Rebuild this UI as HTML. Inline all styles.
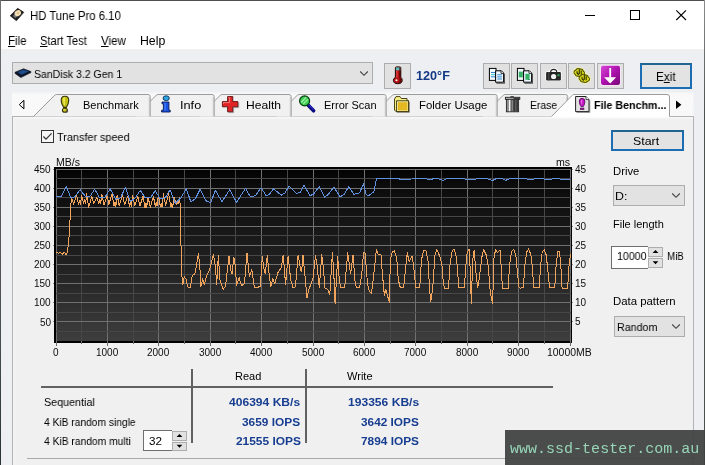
<!DOCTYPE html>
<html lang="en"><head><meta charset="utf-8"><title>HD Tune Pro 6.10</title>
<style>
html,body{margin:0;padding:0}
body{width:705px;height:465px;overflow:hidden;position:relative;background:#eeeff2;font-family:"Liberation Sans",sans-serif;color:#000}
.abs,.t,.b,.btn,.cb{position:absolute;box-sizing:border-box}
.t{white-space:nowrap;line-height:20px;display:block;will-change:transform;transform-origin:0 0}
.t u{text-decoration:underline;text-underline-offset:1px;text-decoration-thickness:1px}
.btn{border:1px solid #adadad;background:#e1e1e1}
.cb{border:1px solid #adadad;background:#e2e2e2}
svg{position:absolute;overflow:visible}
</style></head><body>
<!-- title + menu -->
<div class="abs" style="left:0;top:0;width:705px;height:49px;background:#fff"></div>
<div class="abs" style="left:0;top:49px;width:705px;height:4px;background:#efefef"></div>
<svg style="left:0;top:0" width="40" height="30" viewBox="0 0 40 30">
<path d="M17.6 8.3 L23.8 12.3 L16.4 20.7 L10.2 15.8 Z" fill="#1f1d1b" stroke="#1f1d1b" stroke-width="0.7" stroke-linejoin="round"/>
<path d="M12.8 16 L15.4 18.2 L17.8 15.9 L14.8 14 Z" fill="#70767e"/>
<ellipse cx="17.8" cy="13.1" rx="3.4" ry="2.8" fill="#f2dfb8" transform="rotate(-35 17.8 13.1)"/>
<ellipse cx="17.9" cy="13" rx="1.1" ry="0.9" fill="#dcb478"/>
</svg>
<svg style="left:0;top:0" width="705" height="30" viewBox="0 0 705 30" shape-rendering="crispEdges">
<rect x="585" y="15" width="10" height="1" fill="#000"/>
<rect x="630.5" y="10.5" width="9" height="9" fill="none" stroke="#000" stroke-width="1"/>
<path d="M676.3 10.3 L686 20 M686 10.3 L676.3 20" stroke="#000" stroke-width="1.1" fill="none" shape-rendering="geometricPrecision"/>
</svg>
<!-- toolbar -->
<div class="cb" style="left:12px;top:62px;width:361px;height:22px"></div>
<svg style="left:359px;top:70px" width="10" height="8" viewBox="0 0 10 8"><path d="M1.2 1.5 L5 5.3 L8.8 1.5" fill="none" stroke="#444" stroke-width="1.1"/></svg>
<svg style="left:0;top:0" width="40" height="90" viewBox="0 0 40 90">
<path d="M15 72.2 L23.6 68.8 L31 71.6 L31 72.6 L20.8 77.6 L15 73.4 Z" fill="#0e1526" stroke="#0e1526" stroke-width="0.6" stroke-linejoin="round"/>
<path d="M17.6 72.1 L23.6 69.8 L28.6 71.6 L21.4 74.8 Z" fill="#1f4e8c"/>
</svg>
<div class="btn" style="left:384px;top:63px;width:27px;height:26px"></div>
<div class="btn" style="left:483px;top:63px;width:27px;height:26px"></div>
<div class="btn" style="left:511px;top:63px;width:27px;height:26px"></div>
<div class="btn" style="left:540px;top:63px;width:27px;height:26px"></div>
<div class="btn" style="left:568px;top:63px;width:27px;height:26px"></div>
<div class="btn" style="left:597px;top:63px;width:27px;height:26px"></div>
<svg style="left:0;top:0" width="420" height="95" viewBox="0 0 420 95">
<path d="M395.4 67.9 Q395.4 66.9 396.6 66.9 L399.6 66.9 Q400.8 66.9 400.8 67.9 L400.8 77.3 Q402.2 78.3 402.2 80.3 Q402.2 83.7 397.8 83.7 Q393.4 83.7 393.4 80.3 Q393.4 78.3 395.4 77.3 Z" fill="#b41212" stroke="#1c0606" stroke-width="1"/>
<rect x="395.9" y="67.4" width="4.4" height="3" fill="#5cb8b8"/>
<rect x="399.2" y="67.4" width="1.2" height="10" fill="#3a0808" opacity="0.75"/>
<path d="M399.4 77.6 Q401.6 78.6 401.6 80.3 Q401.6 83 398.4 83.2 Q400.2 81.6 399.4 77.6 Z" fill="#4a0808" opacity="0.8"/>
<rect x="396.3" y="70.5" width="1.2" height="7" fill="#e24848"/>
<circle cx="396.5" cy="80.2" r="1.05" fill="#fff"/>
</svg>
<svg style="left:0;top:0" width="600" height="95" viewBox="0 0 600 95">
<g transform="translate(0 0)">
<rect x="489.4" y="68.4" width="6.6" height="12" fill="#f4fbff" stroke="#000" stroke-width="1"/>
<path d="M495.6 70.8 L501.4 70.8 L503.6 73 L503.6 82.2 L495.6 82.2 Z" fill="#eef6ff" stroke="#000" stroke-width="1"/>
<path d="M501 70.8 L501 73.4 L503.6 73.4" fill="#fff" stroke="#000" stroke-width="0.8"/>
<rect x="503.9" y="73.6" width="0.9" height="9.6" fill="#333"/><rect x="496.4" y="82.7" width="8.4" height="0.9" fill="#333"/>
<g fill="#2f86c8"><rect x="491" y="72" width="4" height="1"/><rect x="491" y="74.2" width="4" height="1" fill="#39c0d8"/><rect x="491" y="76.3" width="4" height="1"/>
<rect x="497.3" y="74.3" width="4.6" height="1"/><rect x="497.3" y="76.4" width="4.6" height="1"/><rect x="497.3" y="78.5" width="4.6" height="1"/></g>
</g></svg>
<svg style="left:0;top:0" width="600" height="95" viewBox="0 0 600 95">
<g transform="translate(28 0)">
<rect x="489.4" y="68.4" width="6.6" height="12" fill="#f4fbff" stroke="#000" stroke-width="1"/>
<path d="M495.6 70.8 L501.4 70.8 L503.6 73 L503.6 82.2 L495.6 82.2 Z" fill="#eef6ff" stroke="#000" stroke-width="1"/>
<path d="M501 70.8 L501 73.4 L503.6 73.4" fill="#fff" stroke="#000" stroke-width="0.8"/>
<rect x="503.9" y="73.6" width="0.9" height="9.6" fill="#333"/><rect x="496.4" y="82.7" width="8.4" height="0.9" fill="#333"/>
<rect x="490.8" y="71.6" width="4" height="5.8" fill="#36b064"/><rect x="497.4" y="73.8" width="4.2" height="6" fill="#36b064"/><rect x="500.5" y="79" width="1" height="1" fill="#063"/>
</g></svg>
<svg style="left:0;top:0" width="600" height="95" viewBox="0 0 600 95">
<path d="M550.6 72 Q550.6 69.2 553.6 69.2 Q556.8 69.2 556.8 72" fill="none" stroke="#fff" stroke-width="2.6"/>
<rect x="545.4" y="71.2" width="16.2" height="9.9" rx="1.8" fill="#fff"/>
<path d="M550.6 72.4 Q550.6 69.4 553.6 69.4 Q556.8 69.4 556.8 72.4" fill="none" stroke="#242424" stroke-width="1.1"/>
<rect x="546.1" y="71.9" width="14.8" height="8.5" rx="1.2" fill="#262626"/>
<rect x="548.4" y="72" width="0.9" height="8.3" fill="#555"/>
<circle cx="553.6" cy="76.5" r="2.6" fill="#f4f4f4"/>
<rect x="557.4" y="74.2" width="2.2" height="2" fill="#2fa05a"/>
</svg>
<svg style="left:0;top:0" width="600" height="95" viewBox="0 0 600 95">
<g fill="#f6f6a8"><circle cx="576.4" cy="72.3" r="3.6"/><circle cx="578.3" cy="71.0" r="3.8"/><circle cx="580.7" cy="71.6" r="3.8"/><circle cx="582.3" cy="73.3" r="3.5"/><circle cx="580.1" cy="74.1" r="3.8"/><circle cx="577.7" cy="73.8" r="3.7"/><circle cx="581.4" cy="78.1" r="3.6"/><circle cx="583.3" cy="76.8" r="3.8"/><circle cx="585.7" cy="77.4" r="3.8"/><circle cx="587.3" cy="79.1" r="3.5"/><circle cx="585.1" cy="79.9" r="3.8"/><circle cx="582.7" cy="79.6" r="3.7"/></g>
<g fill="#4e4e04"><circle cx="576.4" cy="72.3" r="2.8"/><circle cx="578.3" cy="71.0" r="3.0"/><circle cx="580.7" cy="71.6" r="3.0"/><circle cx="582.3" cy="73.3" r="2.7"/><circle cx="580.1" cy="74.1" r="3.0"/><circle cx="577.7" cy="73.8" r="2.9"/></g><g fill="#d8d81c"><circle cx="576.4" cy="72.3" r="1.9"/><circle cx="578.3" cy="71.0" r="2.0"/><circle cx="580.7" cy="71.6" r="2.0"/><circle cx="582.3" cy="73.3" r="1.8"/><circle cx="580.1" cy="74.1" r="2.0"/><circle cx="577.7" cy="73.8" r="2.0"/></g><path d="M579.3 69.3 L579.3 73.9 M581.2 70.5 L581.2 74.5 M577.0 71.3 Q576.7 74.1 579.1 74.5" fill="none" stroke="#2e2e00" stroke-width="1.1"/>
<g fill="#4e4e04"><circle cx="581.4" cy="78.1" r="2.8"/><circle cx="583.3" cy="76.8" r="3.0"/><circle cx="585.7" cy="77.4" r="3.0"/><circle cx="587.3" cy="79.1" r="2.7"/><circle cx="585.1" cy="79.9" r="3.0"/><circle cx="582.7" cy="79.6" r="2.9"/></g><g fill="#d8d81c"><circle cx="581.4" cy="78.1" r="1.9"/><circle cx="583.3" cy="76.8" r="2.0"/><circle cx="585.7" cy="77.4" r="2.0"/><circle cx="587.3" cy="79.1" r="1.8"/><circle cx="585.1" cy="79.9" r="2.0"/><circle cx="582.7" cy="79.6" r="2.0"/></g><path d="M584.3 75.1 L584.3 79.7 M586.2 76.3 L586.2 80.3 M582.0 77.1 Q581.7 79.9 584.1 80.3" fill="none" stroke="#2e2e00" stroke-width="1.1"/>
</svg>
<svg style="left:0;top:0" width="640" height="95" viewBox="0 0 640 95">
<defs><linearGradient id="mg" x1="0" y1="0" x2="1" y2="1"><stop offset="0" stop-color="#d648d6"/><stop offset="0.5" stop-color="#ad12ad"/><stop offset="1" stop-color="#780878"/></linearGradient></defs>
<rect x="600.2" y="64.9" width="20.6" height="20.8" rx="2.6" fill="#fbe6fb"/>
<rect x="601" y="65.7" width="19" height="19.2" rx="1.8" fill="url(#mg)"/>
<path d="M609.3 67.9 L611.1 67.9 L611.1 77.3 L616.1 77.3 L610.2 83.4 L604.1 77.3 L609.3 77.3 Z" fill="#fff"/>
</svg>
<div class="abs" style="left:640px;top:63px;width:52px;height:26px;border:2px solid #1c6db2;border-top-color:#216590;background:#e3e3e3"></div>
<!-- tab strip + page -->
<svg style="left:0;top:0" width="705" height="465" viewBox="0 0 705 465">
<defs><linearGradient id="tsg" x1="0" y1="0" x2="0" y2="1"><stop offset="0" stop-color="#f2f3f5"/><stop offset="0.12" stop-color="#f9f9f9"/><stop offset="1" stop-color="#f8f8f8"/></linearGradient></defs>
<rect x="12" y="92" width="681.5" height="24.5" fill="url(#tsg)"/>
<rect x="12.5" y="116.5" width="681" height="360" fill="#f0f0f0" stroke="#b4b4b4" stroke-width="1"/>
<rect x="13.5" y="117.5" width="679" height="1" fill="#fafafa"/>
<rect x="13.5" y="117.5" width="1" height="350" fill="#f6f6f6"/>
<path d="M482 116.5 L503.4 95.1 Q504 94.5 505 94.5 L565.5 94.5 Q567.7 94.5 567.7 96.7 L567.7 116.5 Z" fill="#f1f1f1" stroke="none"/><path d="M482 116.5 L503.4 95.1 Q504 94.5 505 94.5 L565.5 94.5 Q567.7 94.5 567.7 96.7 L567.7 116.5" fill="none" stroke="#9c9c9c" stroke-width="1"/><path d="M566.8 97.0 L566.8 116.5" fill="none" stroke="#c2c2c2" stroke-width="1"/><path d="M371 116.5 L392.4 95.1 Q393 94.5 394 94.5 L495.0 94.5 Q497.2 94.5 497.2 96.7 L497.2 116.5 Z" fill="#f1f1f1" stroke="none"/><path d="M371 116.5 L392.4 95.1 Q393 94.5 394 94.5 L495.0 94.5 Q497.2 94.5 497.2 96.7 L497.2 116.5" fill="none" stroke="#9c9c9c" stroke-width="1"/><path d="M496.3 97.0 L496.3 116.5" fill="none" stroke="#c2c2c2" stroke-width="1"/><path d="M276 116.5 L297.4 95.1 Q298 94.5 299 94.5 L384.0 94.5 Q386.2 94.5 386.2 96.7 L386.2 116.5 Z" fill="#f1f1f1" stroke="none"/><path d="M276 116.5 L297.4 95.1 Q298 94.5 299 94.5 L384.0 94.5 Q386.2 94.5 386.2 96.7 L386.2 116.5" fill="none" stroke="#9c9c9c" stroke-width="1"/><path d="M385.3 97.0 L385.3 116.5" fill="none" stroke="#c2c2c2" stroke-width="1"/><path d="M199 116.5 L220.4 95.1 Q221 94.5 222 94.5 L289.0 94.5 Q291.2 94.5 291.2 96.7 L291.2 116.5 Z" fill="#f1f1f1" stroke="none"/><path d="M199 116.5 L220.4 95.1 Q221 94.5 222 94.5 L289.0 94.5 Q291.2 94.5 291.2 96.7 L291.2 116.5" fill="none" stroke="#9c9c9c" stroke-width="1"/><path d="M290.3 97.0 L290.3 116.5" fill="none" stroke="#c2c2c2" stroke-width="1"/><path d="M135 116.5 L156.4 95.1 Q157 94.5 158 94.5 L212.0 94.5 Q214.2 94.5 214.2 96.7 L214.2 116.5 Z" fill="#f1f1f1" stroke="none"/><path d="M135 116.5 L156.4 95.1 Q157 94.5 158 94.5 L212.0 94.5 Q214.2 94.5 214.2 96.7 L214.2 116.5" fill="none" stroke="#9c9c9c" stroke-width="1"/><path d="M213.3 97.0 L213.3 116.5" fill="none" stroke="#c2c2c2" stroke-width="1"/><path d="M33.5 116.5 L54.9 95.1 Q55.5 94.5 56.5 94.5 L148.0 94.5 Q150.2 94.5 150.2 96.7 L150.2 116.5 Z" fill="#f1f1f1" stroke="none"/><path d="M33.5 116.5 L54.9 95.1 Q55.5 94.5 56.5 94.5 L148.0 94.5 Q150.2 94.5 150.2 96.7 L150.2 116.5" fill="none" stroke="#9c9c9c" stroke-width="1"/><path d="M149.3 97.0 L149.3 116.5" fill="none" stroke="#c2c2c2" stroke-width="1"/>
<path d="M551.5 116.5 L573 94.5 L667 94.5 Q669.5 94.5 669.5 97 L669.5 117.6 L550.4 117.6 Z" fill="#fff"/>
<path d="M551.5 116.5 L573 94.5 L667 94.5 Q669.5 94.5 669.5 97 L669.5 116.5" fill="none" stroke="#9c9c9c" stroke-width="1"/>
<path d="M23.9 100.3 L23.9 108.9 L19.3 104.6 Z" fill="none" stroke="#000" stroke-width="1"/>
<path d="M676 100.6 L676 109 L681.4 104.8 Z" fill="#000"/>
</svg>
<svg style="left:0;top:0" width="705" height="120" viewBox="0 0 705 120">
<!-- exclamation -->
<path d="M65 96.3 Q68.9 96.3 68.7 100.6 Q68.5 104.4 66.3 107.3 L63.7 107.3 Q61.4 104.4 61.2 100.6 Q61 96.3 65 96.3 Z" fill="#c6c218" stroke="#34340a" stroke-width="1.1"/>
<path d="M63.2 98.2 Q64 97.2 65 97.4 L65 105 L63.9 105 Q62.5 101 63.2 98.2 Z" fill="#e6e650"/>
<rect x="63.4" y="107" width="3.2" height="1.2" fill="#34340a"/>
<ellipse cx="64.9" cy="110.3" rx="2.5" ry="2" fill="#c6c218" stroke="#34340a" stroke-width="1.1"/>
<ellipse cx="64.2" cy="109.8" rx="0.9" ry="0.7" fill="#e6e650"/>
<ellipse cx="66.8" cy="111.6" rx="1.5" ry="1.1" fill="#5a4a50" opacity="0.55"/>
<!-- info -->
<ellipse cx="166.2" cy="98.2" rx="3.1" ry="2.4" fill="#2ea6e0" stroke="#0c2c58" stroke-width="0.9"/>
<path d="M162 102 L168.9 102 L168.9 110.2 L170.2 110.2 L170.2 112 L161.6 112 L161.6 110.2 L163.4 110.2 L163.4 103.8 L162 103.8 Z" fill="#1a52e4" stroke="#0a1850" stroke-width="0.9" stroke-linejoin="round"/>
<rect x="164.3" y="103" width="1.6" height="7.5" fill="#4a86f8" opacity="0.7"/>
<!-- health cross -->
<path d="M227.6 96.6 L232.8 96.6 L232.8 101.6 L237.9 101.6 L237.9 106.8 L232.8 106.8 L232.8 111.8 L227.6 111.8 L227.6 106.8 L222.4 106.8 L222.4 101.6 L227.6 101.6 Z" fill="#e02424" stroke="#5a1010" stroke-width="0.9" stroke-linejoin="round"/>
<path d="M228.4 97.6 L229.6 97.6 L229.6 102.6 L223.4 102.6 L223.4 103.8" fill="none" stroke="#f47878" stroke-width="1"/>
<path d="M233.6 107.6 L238.7 107.6 L238.7 102.6 M228.4 112.6 L233.6 112.6 L233.6 107.6" fill="none" stroke="#7a6060" stroke-width="0.9" opacity="0.6"/>
<!-- magnifier -->
<path d="M308 105 L313.6 110.8" stroke="#0c0c7c" stroke-width="3.6" stroke-linecap="round"/>
<path d="M308.6 104.4 L313.2 109.4" stroke="#2828c8" stroke-width="1.2" stroke-linecap="round"/>
<circle cx="304.6" cy="100.9" r="5.0" fill="#3ccc50" stroke="#063a0e" stroke-width="1.2"/>
<path d="M301.6 102 L305.8 97.6 M303.6 103.6 L307.6 99.6" stroke="#a0f0a8" stroke-width="1.3" stroke-linecap="round"/>
<!-- folder -->
<path d="M394.5 99 L396 96.6 L400 96.6 L401.4 98.5 L407 98.5 L407 101 L408.6 101 L408.6 111.6 L396.4 111.6 L394.5 110.2 Z" fill="#f4ee86" stroke="#3a3204" stroke-width="0.9" stroke-linejoin="round"/>
<rect x="396.6" y="100.8" width="12" height="10.8" fill="#f6efa0" stroke="#3a3204" stroke-width="0.9"/>
<rect x="398" y="102.2" width="9.4" height="8.2" fill="#e4b822"/>
<path d="M409.4 102 L409.4 112.4 L397 112.4" fill="none" stroke="#6a6458" stroke-width="0.9" opacity="0.7"/>
<!-- trash -->
<rect x="510.4" y="96.2" width="3.4" height="1.4" fill="#2c2c2c"/>
<rect x="505.4" y="97.3" width="14.4" height="2" fill="#c4c4c4" stroke="#222" stroke-width="0.9"/>
<rect x="513.6" y="97.6" width="6" height="1.5" fill="#3a3a3a"/>
<rect x="506.4" y="99.4" width="12.2" height="12.4" fill="#8c8c8c" stroke="#262626" stroke-width="0.9"/>
<rect x="513.2" y="99.8" width="5" height="11.6" fill="#383838"/>
<rect x="508.9" y="99.8" width="1.3" height="11.4" fill="#f4f4f4"/>
<rect x="511.2" y="99.8" width="1" height="11.4" fill="#5a5a5a"/>
<rect x="515.4" y="99.8" width="0.9" height="11.4" fill="#6c6c6c"/>
<!-- file benchmark page -->
<path d="M575.6 96.5 L586 96.5 L589 99.6 L589 111.6 L575.6 111.6 Z" fill="#e4e2e4" stroke="#222" stroke-width="1" stroke-linejoin="round"/>
<path d="M586 96.5 L586 99.6 L589 99.6" fill="#fff" stroke="#222" stroke-width="0.8"/>
<path d="M589.8 100.4 L589.8 112.4 L576.6 112.4" fill="none" stroke="#444" stroke-width="0.8" opacity="0.7"/>
<path d="M582.1 98.3 Q585 98.3 584.9 101.6 Q584.8 104.4 583.3 106.6 L581 106.6 Q579.4 104.4 579.3 101.6 Q579.2 98.3 582.1 98.3 Z" fill="#c214c2" stroke="#4c0850" stroke-width="0.8"/>
<path d="M581 100 Q581.6 99.3 582.2 99.4 L582.2 104.6 L581.4 104.6 Q580.6 102 581 100 Z" fill="#e868e8"/>
<rect x="580.2" y="108" width="3.8" height="1.7" fill="#8a1a8a" stroke="#4c0850" stroke-width="0.5"/>
</svg>
<!-- page contents -->
<div class="abs" style="left:41px;top:130px;width:13px;height:13px;border:1px solid #333;background:#f6f6f6"></div>
<svg style="left:41px;top:130px" width="13" height="13" viewBox="0 0 13 13"><path d="M2.4 6.5 L5 9.2 L10.6 3.4" fill="none" stroke="#333" stroke-width="1.25"/></svg>
<svg class="abs" style="left:0;top:0" width="705" height="465" viewBox="0 0 705 465">
<defs><linearGradient id="cg" x1="0" y1="0" x2="0" y2="1"><stop offset="0" stop-color="#030303"/><stop offset="0.1" stop-color="#0c0c0c"/><stop offset="0.28" stop-color="#141414"/><stop offset="0.6" stop-color="#232323"/><stop offset="0.85" stop-color="#343434"/><stop offset="1" stop-color="#3e3e3e"/></linearGradient></defs>
<rect x="54" y="167" width="518" height="176" fill="#000"/>
<rect x="56" y="169" width="515" height="172" fill="url(#cg)"/>
<g shape-rendering="crispEdges" stroke-width="1"><line x1="56.5" y1="169" x2="56.5" y2="341" stroke="#707070"/><line x1="81.5" y1="169" x2="81.5" y2="341" stroke="#474747"/><line x1="107.5" y1="169" x2="107.5" y2="341" stroke="#707070"/><line x1="133.5" y1="169" x2="133.5" y2="341" stroke="#474747"/><line x1="158.5" y1="169" x2="158.5" y2="341" stroke="#707070"/><line x1="184.5" y1="169" x2="184.5" y2="341" stroke="#474747"/><line x1="210.5" y1="169" x2="210.5" y2="341" stroke="#707070"/><line x1="235.5" y1="169" x2="235.5" y2="341" stroke="#474747"/><line x1="261.5" y1="169" x2="261.5" y2="341" stroke="#707070"/><line x1="287.5" y1="169" x2="287.5" y2="341" stroke="#474747"/><line x1="313.5" y1="169" x2="313.5" y2="341" stroke="#707070"/><line x1="338.5" y1="169" x2="338.5" y2="341" stroke="#474747"/><line x1="364.5" y1="169" x2="364.5" y2="341" stroke="#707070"/><line x1="390.5" y1="169" x2="390.5" y2="341" stroke="#474747"/><line x1="415.5" y1="169" x2="415.5" y2="341" stroke="#707070"/><line x1="441.5" y1="169" x2="441.5" y2="341" stroke="#474747"/><line x1="467.5" y1="169" x2="467.5" y2="341" stroke="#707070"/><line x1="492.5" y1="169" x2="492.5" y2="341" stroke="#474747"/><line x1="518.5" y1="169" x2="518.5" y2="341" stroke="#707070"/><line x1="544.5" y1="169" x2="544.5" y2="341" stroke="#474747"/><line x1="570.5" y1="169" x2="570.5" y2="341" stroke="#707070"/><line x1="56" y1="169.5" x2="571" y2="169.5" stroke="#707070"/><line x1="56" y1="178.5" x2="571" y2="178.5" stroke="#474747"/><line x1="56" y1="188.5" x2="571" y2="188.5" stroke="#707070"/><line x1="56" y1="197.5" x2="571" y2="197.5" stroke="#474747"/><line x1="56" y1="207.5" x2="571" y2="207.5" stroke="#707070"/><line x1="56" y1="216.5" x2="571" y2="216.5" stroke="#474747"/><line x1="56" y1="226.5" x2="571" y2="226.5" stroke="#707070"/><line x1="56" y1="235.5" x2="571" y2="235.5" stroke="#474747"/><line x1="56" y1="245.5" x2="571" y2="245.5" stroke="#707070"/><line x1="56" y1="255.5" x2="571" y2="255.5" stroke="#474747"/><line x1="56" y1="264.5" x2="571" y2="264.5" stroke="#707070"/><line x1="56" y1="274.5" x2="571" y2="274.5" stroke="#474747"/><line x1="56" y1="283.5" x2="571" y2="283.5" stroke="#707070"/><line x1="56" y1="293.5" x2="571" y2="293.5" stroke="#474747"/><line x1="56" y1="302.5" x2="571" y2="302.5" stroke="#707070"/><line x1="56" y1="312.5" x2="571" y2="312.5" stroke="#474747"/><line x1="56" y1="321.5" x2="571" y2="321.5" stroke="#707070"/><line x1="56" y1="331.5" x2="571" y2="331.5" stroke="#474747"/>
<line x1="56.5" y1="341" x2="56.5" y2="346" stroke="#6c6c6c"/><line x1="81.5" y1="341" x2="81.5" y2="344" stroke="#6c6c6c"/><line x1="107.5" y1="341" x2="107.5" y2="346" stroke="#6c6c6c"/><line x1="133.5" y1="341" x2="133.5" y2="344" stroke="#6c6c6c"/><line x1="158.5" y1="341" x2="158.5" y2="346" stroke="#6c6c6c"/><line x1="184.5" y1="341" x2="184.5" y2="344" stroke="#6c6c6c"/><line x1="210.5" y1="341" x2="210.5" y2="346" stroke="#6c6c6c"/><line x1="235.5" y1="341" x2="235.5" y2="344" stroke="#6c6c6c"/><line x1="261.5" y1="341" x2="261.5" y2="346" stroke="#6c6c6c"/><line x1="287.5" y1="341" x2="287.5" y2="344" stroke="#6c6c6c"/><line x1="313.5" y1="341" x2="313.5" y2="346" stroke="#6c6c6c"/><line x1="338.5" y1="341" x2="338.5" y2="344" stroke="#6c6c6c"/><line x1="364.5" y1="341" x2="364.5" y2="346" stroke="#6c6c6c"/><line x1="390.5" y1="341" x2="390.5" y2="344" stroke="#6c6c6c"/><line x1="415.5" y1="341" x2="415.5" y2="346" stroke="#6c6c6c"/><line x1="441.5" y1="341" x2="441.5" y2="344" stroke="#6c6c6c"/><line x1="467.5" y1="341" x2="467.5" y2="346" stroke="#6c6c6c"/><line x1="492.5" y1="341" x2="492.5" y2="344" stroke="#6c6c6c"/><line x1="518.5" y1="341" x2="518.5" y2="346" stroke="#6c6c6c"/><line x1="544.5" y1="341" x2="544.5" y2="344" stroke="#6c6c6c"/><line x1="570.5" y1="341" x2="570.5" y2="346" stroke="#6c6c6c"/><line x1="53" y1="169.5" x2="54" y2="169.5" stroke="#8a8a8a"/><line x1="572" y1="169.5" x2="573" y2="169.5" stroke="#8a8a8a"/><line x1="53" y1="188.5" x2="54" y2="188.5" stroke="#8a8a8a"/><line x1="572" y1="188.5" x2="573" y2="188.5" stroke="#8a8a8a"/><line x1="53" y1="207.5" x2="54" y2="207.5" stroke="#8a8a8a"/><line x1="572" y1="207.5" x2="573" y2="207.5" stroke="#8a8a8a"/><line x1="53" y1="226.5" x2="54" y2="226.5" stroke="#8a8a8a"/><line x1="572" y1="226.5" x2="573" y2="226.5" stroke="#8a8a8a"/><line x1="53" y1="245.5" x2="54" y2="245.5" stroke="#8a8a8a"/><line x1="572" y1="245.5" x2="573" y2="245.5" stroke="#8a8a8a"/><line x1="53" y1="264.5" x2="54" y2="264.5" stroke="#8a8a8a"/><line x1="572" y1="264.5" x2="573" y2="264.5" stroke="#8a8a8a"/><line x1="53" y1="283.5" x2="54" y2="283.5" stroke="#8a8a8a"/><line x1="572" y1="283.5" x2="573" y2="283.5" stroke="#8a8a8a"/><line x1="53" y1="302.5" x2="54" y2="302.5" stroke="#8a8a8a"/><line x1="572" y1="302.5" x2="573" y2="302.5" stroke="#8a8a8a"/><line x1="53" y1="321.5" x2="54" y2="321.5" stroke="#8a8a8a"/><line x1="572" y1="321.5" x2="573" y2="321.5" stroke="#8a8a8a"/></g>
<polyline points="56.4,252.4 58.5,253.2 60.5,252.2 62.5,254.4 64.0,251.8 66.0,254.8 67.5,252.5 68.9,238.5 69.9,222.6 70.8,204.7 71.8,198.8 73.6,204.1 76.7,194.9 78.5,205.0 79.5,201.0 80.3,204.6 81.6,195.7 83.7,203.8 84.7,199.1 85.5,203.5 86.8,193.9 88.7,207.6 91.8,196.1 93.8,203.6 96.9,197.5 98.8,203.9 99.8,199.3 100.6,203.7 101.9,194.2 104.0,205.0 107.1,196.2 108.9,204.3 112.0,193.8 114.0,206.0 115.0,202.4 115.8,206.7 117.1,194.9 119.3,205.9 122.4,194.6 124.6,204.7 127.7,196.5 129.6,206.7 130.6,202.8 131.4,206.3 132.7,195.3 134.8,205.9 137.9,196.7 139.9,206.0 143.0,196.4 145.0,207.6 146.0,203.2 146.8,207.1 148.1,197.0 150.3,207.8 153.4,196.2 155.3,206.3 156.3,202.4 157.1,206.1 158.4,195.1 160.3,206.8 161.3,203.3 162.1,206.9 163.4,193.8 165.6,205.4 168.7,193.9 170.9,207.2 171.9,203.4 172.7,207.2 174.0,196.9 176.3,204.1 177.3,200.6 178.1,203.9 179.4,197.4 179.2,198.5 180.3,204.0 180.9,240.0 181.5,271.8 182.9,284.7 184.3,276.7 186.3,279.7 187.5,286.7 190.3,287.7 192.2,275.7 194.8,273.8 196.8,263.8 198.4,253.5 199.8,265.8 200.8,286.7 202.8,278.7 204.2,284.7 206.7,275.7 209.7,269.8 213.3,254.3 215.3,265.8 216.7,284.7 218.3,255.5 220.0,279.7 223.2,289.6 225.6,285.7 229.0,255.9 230.6,269.8 232.0,273.8 233.9,256.9 235.5,267.8 236.5,285.7 239.1,277.7 241.5,285.7 244.5,283.7 247.0,252.9 249.4,276.7 251.8,269.8 254.4,287.7 260.3,286.7 262.3,256.3 263.7,267.8 265.3,273.8 267.3,255.5 269.3,275.7 270.9,286.7 272.9,278.7 274.8,283.7 278.2,271.8 281.2,267.8 283.2,254.9 285.6,284.7 288.1,255.9 290.7,279.7 293.1,287.7 295.5,286.7 298.1,254.9 300.7,269.8 301.6,271.8 303.0,254.9 304.4,269.8 307.0,297.6 308.9,289.6 312.9,278.7 315.5,255.9 316.9,263.8 319.3,287.7 321.8,254.9 323.4,267.8 324.8,287.7 327.8,289.6 329.8,294.6 332.4,252.9 333.8,273.8 335.1,303.5 337.7,256.9 339.3,279.7 340.7,287.7 344.7,287.7 347.7,252.9 350.6,273.8 353.0,254.9 355.2,283.7 356.6,287.7 359.6,287.7 361.6,275.7 363.5,252.9 365.1,252.9 367.5,283.7 369.5,291.6 371.5,293.6 374.5,267.8 376.4,249.5 378.4,254.9 381.0,254.9 382.4,273.8 384.4,295.6 385.8,289.6 389.4,302.5 390.3,259.9 392.3,251.9 394.3,250.9 396.7,257.9 398.3,279.7 400.3,287.7 403.7,287.7 405.2,271.8 407.2,252.9 409.2,261.8 412.2,255.9 414.2,271.8 415.8,287.7 419.7,287.7 421.5,259.9 423.5,250.9 426.1,250.9 428.1,261.8 429.5,287.7 430.7,301.5 432.6,289.6 435.0,254.9 436.6,249.9 437.5,250.9 440.0,256.9 442.0,265.8 443.3,282.7 444.5,288.1 448.5,288.1 449.9,265.8 451.9,251.9 453.9,248.9 455.9,254.9 457.2,265.8 458.8,287.7 464.4,287.7 465.8,265.8 467.2,251.9 469.2,248.9 470.3,271.8 471.3,303.5 472.7,259.9 474.1,249.9 475.7,269.8 477.7,287.7 479.1,279.7 481.7,257.9 483.6,249.5 486.2,254.9 488.2,265.8 490.2,291.6 492.6,303.5 494.0,257.9 495.6,249.5 497.5,252.9 500.1,249.9 501.1,265.8 502.5,288.6 508.1,288.6 509.5,265.8 511.4,251.9 513.8,249.5 515.8,254.9 517.4,271.8 518.8,286.7 520.4,288.1 523.4,287.7 524.8,265.8 526.7,251.9 528.7,248.9 530.9,254.9 532.3,265.8 533.7,287.7 539.2,287.7 540.6,265.8 542.2,251.9 544.2,249.9 546.2,254.9 547.8,269.8 549.6,287.7 554.7,287.7 556.1,265.8 557.7,251.9 559.1,250.9 560.5,259.9 562.1,288.6 567.6,288.6 569.0,265.8 570.5,253.9" fill="none" stroke="#f0a45c" stroke-width="1" stroke-linejoin="round" shape-rendering="crispEdges"/>
<polyline points="56.4,196.4 60.9,196.8 66.3,186.4 70.8,197.8 74.8,196.8 80.2,189.8 85.7,196.8 89.7,196.8 94.7,189.2 99.6,197.8 104.6,197.8 110.2,188.8 115.5,199.2 120.5,197.8 125.5,187.2 130.4,201.7 135.4,197.8 140.3,190.4 145.3,197.8 150.3,197.8 155.2,190.8 160.2,198.8 165.2,197.8 170.1,189.8 175.1,203.2 181.0,197.8 186.3,188.8 190.8,201.7 195.4,198.8 200.2,189.2 205.7,200.7 210.7,202.7 215.3,190.4 222.0,201.7 229.6,189.8 236.5,202.3 245.5,188.4 250.4,196.8 255.4,195.8 261.0,187.8 266.3,195.8 269.3,194.4 273.7,188.8 281.2,195.2 285.2,192.8 289.1,185.9 296.1,193.2 300.0,192.8 304.0,185.3 310.0,195.8 313.9,193.8 319.3,186.4 324.8,197.2 328.8,193.8 333.8,187.2 340.3,196.8 344.7,193.8 348.7,186.4 354.0,194.4 359.6,192.8 363.5,183.9 366.1,194.8 368.5,195.8 373.9,191.8 376.5,178.9 385.4,178.5 398.0,178.4 400.0,179.2 412.0,179.0 420.0,178.5 430.0,179.2 438.0,178.6 443.0,180.3 446.0,179.0 460.0,178.7 470.0,179.3 480.0,178.8 488.0,179.0 492.6,180.4 496.0,178.8 503.0,179.0 505.5,180.4 509.0,179.0 520.0,178.6 530.0,179.2 540.0,178.7 548.0,179.4 556.0,178.7 563.0,179.2 570.5,179.3" fill="none" stroke="#6090e0" stroke-width="1" stroke-linejoin="round" shape-rendering="crispEdges"/>
</svg>
<div class="abs" style="left:611px;top:130px;width:73px;height:21px;border:2px solid #1c6db2;border-top-color:#216590;background:#e3e3e3"></div>
<div class="cb" style="left:613px;top:185px;width:72px;height:21px"></div>
<svg style="left:671px;top:192px" width="10" height="8" viewBox="0 0 10 8"><path d="M1.2 1.5 L5 5.3 L8.8 1.5" fill="none" stroke="#444" stroke-width="1.1"/></svg>
<div class="abs" style="left:611px;top:246px;width:37px;height:23px;background:#fff;border:1px solid #6e6e6e;border-right:none"></div>
<div class="btn" style="left:648px;top:247px;width:15px;height:10px"></div>
<div class="btn" style="left:648px;top:258px;width:15px;height:10px"></div>
<svg style="left:648px;top:247px" width="15" height="21" viewBox="0 0 15 21"><path d="M4.6 6 L10.4 6 L7.5 3 Z M4.6 14.2 L10.4 14.2 L7.5 17.2 Z" fill="#000"/></svg>
<div class="cb" style="left:614px;top:316px;width:71px;height:21px"></div>
<svg style="left:671px;top:323px" width="10" height="8" viewBox="0 0 10 8"><path d="M1.2 1.5 L5 5.3 L8.8 1.5" fill="none" stroke="#444" stroke-width="1.1"/></svg>
<!-- results table -->
<div class="abs" style="left:41px;top:386px;width:512px;height:2px;background:#616161"></div>
<div class="abs" style="left:191px;top:369px;width:2px;height:74px;background:#616161"></div>
<div class="abs" style="left:305px;top:369px;width:2px;height:74px;background:#616161"></div>
<div class="abs" style="left:143px;top:430px;width:29px;height:21px;background:#fff;border:1px solid #6e6e6e;border-right:none"></div>
<div class="btn" style="left:172px;top:431px;width:15px;height:10px"></div>
<div class="btn" style="left:172px;top:442px;width:15px;height:9px"></div>
<svg style="left:172px;top:431px" width="15" height="21" viewBox="0 0 15 21"><path d="M4.6 6 L10.4 6 L7.5 3 Z M4.6 13.8 L10.4 13.8 L7.5 16.8 Z" fill="#000"/></svg>
<div class="abs" style="left:27px;top:458px;width:666px;height:1px;background:#a9a9a9"></div>
<!-- window frame -->
<div class="abs" style="left:0;top:0;width:705px;height:1px;background:#4e4e4e"></div>
<div class="abs" style="left:0;top:0;width:1px;height:465px;background:linear-gradient(#707070,#5c5f5e 30%,#4a5250 70%,#263430)"></div>
<div class="abs" style="left:704px;top:0;width:1px;height:465px;background:linear-gradient(#8c8c8c,#6c706f 12%,#4c524f 25%,#4a504e)"></div>
<!-- watermark -->
<div class="abs" style="left:505px;top:430px;width:200px;height:35px;background:rgba(62,64,63,0.93)"></div>
<span class="t" style="left:30.10px;top:6.00px;font-size:12px;transform:scaleX(0.9442);">HD Tune Pro 6.10</span>
<span class="t" style="left:7.69px;top:31.00px;font-size:12px;transform:scaleX(0.9573);"><u>F</u>ile</span>
<span class="t" style="left:40.14px;top:31.00px;font-size:12px;transform:scaleX(0.9262);"><u>S</u>tart Test</span>
<span class="t" style="left:100.75px;top:31.00px;font-size:12px;transform:scaleX(0.9621);"><u>V</u>iew</span>
<span class="t" style="left:139.93px;top:31.00px;font-size:12px;transform:scaleX(1.0234);">Help</span>
<span class="t" style="left:33.97px;top:64.00px;font-size:11px;transform:scaleX(0.9545);">SanDisk 3.2 Gen 1</span>
<span class="t" style="left:415.81px;top:66.30px;font-size:12px;font-weight:700;color:#133885;transform:scaleX(1.0526);">120°F</span>
<span class="t" style="left:655.57px;top:66.60px;font-size:12px;transform:scaleX(0.9752);">E<u>x</u>it</span>
<span class="t" style="left:82.70px;top:95.00px;font-size:11px;">Benchmark</span>
<span class="t" style="left:180.44px;top:95.00px;font-size:11px;transform:scaleX(1.1577);">Info</span>
<span class="t" style="left:246.11px;top:95.00px;font-size:11px;transform:scaleX(1.1016);">Health</span>
<span class="t" style="left:323.80px;top:95.00px;font-size:11px;">Error Scan</span>
<span class="t" style="left:418.67px;top:95.00px;font-size:11px;transform:scaleX(1.0346);">Folder Usage</span>
<span class="t" style="left:529.75px;top:95.00px;font-size:11px;transform:scaleX(0.9464);">Erase</span>
<span class="t" style="left:594.22px;top:95.00px;font-size:11px;font-weight:700;transform:scaleX(0.9711);">File Benchm...</span>
<span class="t" style="left:57.10px;top:127.00px;font-size:11px;transform:scaleX(0.9875);">Transfer speed</span>
<span class="t" style="left:633.00px;top:131.00px;font-size:11px;transform:scaleX(1.1222);">Start</span>
<span class="t" style="left:612.68px;top:161.00px;font-size:11px;transform:scaleX(1.0247);">Drive</span>
<span class="t" style="left:615.19px;top:185.60px;font-size:11px;transform:scaleX(1.1264);">D:</span>
<span class="t" style="left:612.60px;top:213.70px;font-size:11px;">File length</span>
<span class="t" style="left:617.13px;top:246.20px;font-size:11px;transform:scaleX(0.9669);">10000</span>
<span class="t" style="left:666.90px;top:246.20px;font-size:11px;transform:scaleX(0.8911);">MiB</span>
<span class="t" style="left:612.57px;top:291.00px;font-size:11px;transform:scaleX(1.0344);">Data pattern</span>
<span class="t" style="left:616.83px;top:317.00px;font-size:11px;transform:scaleX(0.9709);">Random</span>
<span class="t" style="left:55.86px;top:152.70px;font-size:10px;color:#0c0c0c;transform:scaleX(1.0542);">MB/s</span>
<span class="t" style="left:555.91px;top:152.70px;font-size:10px;color:#0c0c0c;transform:scaleX(1.0624);">ms</span>
<span class="t" style="left:34.48px;top:159.70px;font-size:10px;color:#0c0c0c;">450</span>
<span class="t" style="left:34.48px;top:178.81px;font-size:10px;color:#0c0c0c;">400</span>
<span class="t" style="left:34.48px;top:197.92px;font-size:10px;color:#0c0c0c;">350</span>
<span class="t" style="left:34.48px;top:217.03px;font-size:10px;color:#0c0c0c;">300</span>
<span class="t" style="left:34.48px;top:236.14px;font-size:10px;color:#0c0c0c;">250</span>
<span class="t" style="left:34.48px;top:255.26px;font-size:10px;color:#0c0c0c;">200</span>
<span class="t" style="left:34.48px;top:274.37px;font-size:10px;color:#0c0c0c;">150</span>
<span class="t" style="left:34.48px;top:293.48px;font-size:10px;color:#0c0c0c;">100</span>
<span class="t" style="left:40.04px;top:312.59px;font-size:10px;color:#0c0c0c;">50</span>
<span class="t" style="left:575.30px;top:159.50px;font-size:10px;color:#0c0c0c;">45</span>
<span class="t" style="left:575.30px;top:178.61px;font-size:10px;color:#0c0c0c;">40</span>
<span class="t" style="left:575.15px;top:197.72px;font-size:10px;color:#0c0c0c;">35</span>
<span class="t" style="left:575.15px;top:216.83px;font-size:10px;color:#0c0c0c;">30</span>
<span class="t" style="left:575.00px;top:235.94px;font-size:10px;color:#0c0c0c;">25</span>
<span class="t" style="left:575.00px;top:255.06px;font-size:10px;color:#0c0c0c;">20</span>
<span class="t" style="left:574.75px;top:274.17px;font-size:10px;color:#0c0c0c;">15</span>
<span class="t" style="left:574.75px;top:293.28px;font-size:10px;color:#0c0c0c;">10</span>
<span class="t" style="left:575.10px;top:312.39px;font-size:10px;color:#0c0c0c;">5</span>
<span class="t" style="left:53.32px;top:342.80px;font-size:10px;color:#0c0c0c;">0</span>
<span class="t" style="left:95.98px;top:342.80px;font-size:10px;color:#0c0c0c;">1000</span>
<span class="t" style="left:146.98px;top:342.80px;font-size:10px;color:#0c0c0c;">2000</span>
<span class="t" style="left:198.98px;top:342.80px;font-size:10px;color:#0c0c0c;">3000</span>
<span class="t" style="left:249.98px;top:342.80px;font-size:10px;color:#0c0c0c;">4000</span>
<span class="t" style="left:301.98px;top:342.80px;font-size:10px;color:#0c0c0c;">5000</span>
<span class="t" style="left:352.98px;top:342.80px;font-size:10px;color:#0c0c0c;">6000</span>
<span class="t" style="left:403.98px;top:342.80px;font-size:10px;color:#0c0c0c;">7000</span>
<span class="t" style="left:455.98px;top:342.80px;font-size:10px;color:#0c0c0c;">8000</span>
<span class="t" style="left:506.98px;top:342.80px;font-size:10px;color:#0c0c0c;">9000</span>
<span class="t" style="left:547.42px;top:342.80px;font-size:10px;color:#0c0c0c;transform:scaleX(1.0448);">10000MB</span>
<span class="t" style="left:234.60px;top:366.30px;font-size:11px;">Read</span>
<span class="t" style="left:346.90px;top:366.30px;font-size:11px;transform:scaleX(1.0041);">Write</span>
<span class="t" style="left:43.66px;top:391.80px;font-size:11px;transform:scaleX(0.9756);">Sequential</span>
<span class="t" style="left:43.87px;top:412.00px;font-size:11px;transform:scaleX(0.9302);">4 KiB random single</span>
<span class="t" style="left:43.87px;top:431.30px;font-size:11px;transform:scaleX(0.9339);">4 KiB random multi</span>
<span class="t" style="left:148.58px;top:431.30px;font-size:11px;transform:scaleX(1.0603);">32</span>
<span class="t" style="left:229.34px;top:392.00px;font-size:11px;font-weight:700;color:#173d90;transform:scaleX(1.0972);">406394 KB/s</span>
<span class="t" style="left:242.33px;top:412.00px;font-size:11px;font-weight:700;color:#173d90;transform:scaleX(1.0794);">3659 IOPS</span>
<span class="t" style="left:235.52px;top:431.30px;font-size:11px;font-weight:700;color:#173d90;transform:scaleX(1.0829);">21555 IOPS</span>
<span class="t" style="left:348.09px;top:392.00px;font-size:11px;font-weight:700;color:#173d90;transform:scaleX(1.0979);">193356 KB/s</span>
<span class="t" style="left:361.43px;top:412.00px;font-size:11px;font-weight:700;color:#173d90;transform:scaleX(1.0738);">3642 IOPS</span>
<span class="t" style="left:361.21px;top:431.30px;font-size:11px;font-weight:700;color:#173d90;transform:scaleX(1.0778);">7894 IOPS</span>
<span class="t" style="left:510.40px;top:439.30px;font-size:14px;color:#97d6b8;font-family:'Liberation Mono', monospace;transform:scaleX(1.0728);">www.ssd-tester.com.au</span>
</body></html>
